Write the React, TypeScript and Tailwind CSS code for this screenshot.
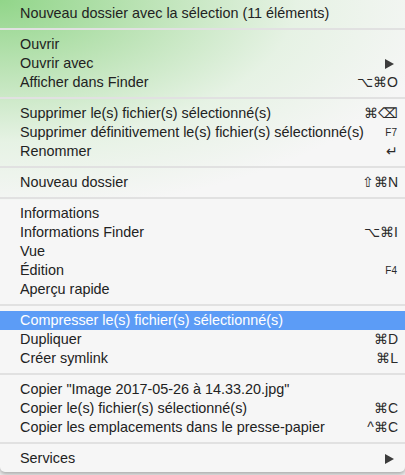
import React from "react";

type Item = {
  label: string;
  shortcut?: string;
  small?: boolean;
  arrow?: boolean;
  active?: boolean;
};

const sections: Item[][] = [
  [{ label: "Nouveau dossier avec la sélection (11 éléments)" }],
  [
    { label: "Ouvrir" },
    { label: "Ouvrir avec", arrow: true },
    { label: "Afficher dans Finder", shortcut: "⌥⌘O" },
  ],
  [
    { label: "Supprimer le(s) fichier(s) sélectionné(s)", shortcut: "⌘⌫" },
    { label: "Supprimer définitivement le(s) fichier(s) sélectionné(s)", shortcut: "F7", small: true },
    { label: "Renommer", shortcut: "↵" },
  ],
  [{ label: "Nouveau dossier", shortcut: "⇧⌘N" }],
  [
    { label: "Informations" },
    { label: "Informations Finder", shortcut: "⌥⌘I" },
    { label: "Vue" },
    { label: "Édition", shortcut: "F4", small: true },
    { label: "Aperçu rapide" },
  ],
  [
    { label: "Compresser le(s) fichier(s) sélectionné(s)", active: true },
    { label: "Dupliquer", shortcut: "⌘D" },
    { label: "Créer symlink", shortcut: "⌘L" },
  ],
  [
    { label: 'Copier "Image 2017-05-26 à 14.33.20.jpg"' },
    { label: "Copier le(s) fichier(s) sélectionné(s)", shortcut: "⌘C" },
    { label: "Copier les emplacements dans le presse-papier", shortcut: "^⌘C" },
  ],
  [{ label: "Services", arrow: true }],
];

function Row({ item }: { item: Item }) {
  return (
    <div
      className={`flex h-[19px] items-center justify-between pl-[20px] pr-[7px] ${
        item.active ? "bg-[#5c9cf6] text-white" : "text-[#222]"
      }`}
    >
      <span className="whitespace-nowrap">{item.label}</span>
      {item.shortcut && (
        <span
          className={`whitespace-nowrap text-[#2a2a2a] ${
            item.small ? "pr-[1px] text-[10px]" : "text-[14px]"
          }`}
        >
          {item.shortcut}
        </span>
      )}
      {item.arrow && (
        <svg width="9" height="10" viewBox="0 0 9 10" className="mr-[4px]">
          <polygon points="0,0 9,5 0,10" fill="#3c3c3c" />
        </svg>
      )}
    </div>
  );
}

export default function App() {
  return (
    <div className="h-[475px] w-[405px] overflow-hidden bg-[#eeeeee] font-['Liberation_Sans','Helvetica',sans-serif] text-[14.4px]">
      <div className="relative rounded-b-[5px] bg-[#f6f6f6] pb-[4px] pt-[4px] shadow-[0_2px_4px_rgba(0,0,0,0.3)]">
        {/* green glow from the window behind the translucent menu */}
        <div className="pointer-events-none absolute left-0 top-0 h-[200px] w-[420px] bg-[radial-gradient(ellipse_at_top_left,rgba(120,205,110,0.8)_0%,rgba(150,215,140,0.6)_25%,rgba(200,235,195,0.35)_50%,rgba(246,246,246,0)_75%)]" />
        <div className="relative">
          {sections.map((section, i) => (
            <div key={i}>
              {i > 0 && (
                <div className="flex h-[12px] items-center">
                  <div className="h-[2px] w-full bg-[#e1e1e1]" />
                </div>
              )}
              {section.map((item) => (
                <Row key={item.label} item={item} />
              ))}
            </div>
          ))}
        </div>
      </div>
    </div>
  );
}
